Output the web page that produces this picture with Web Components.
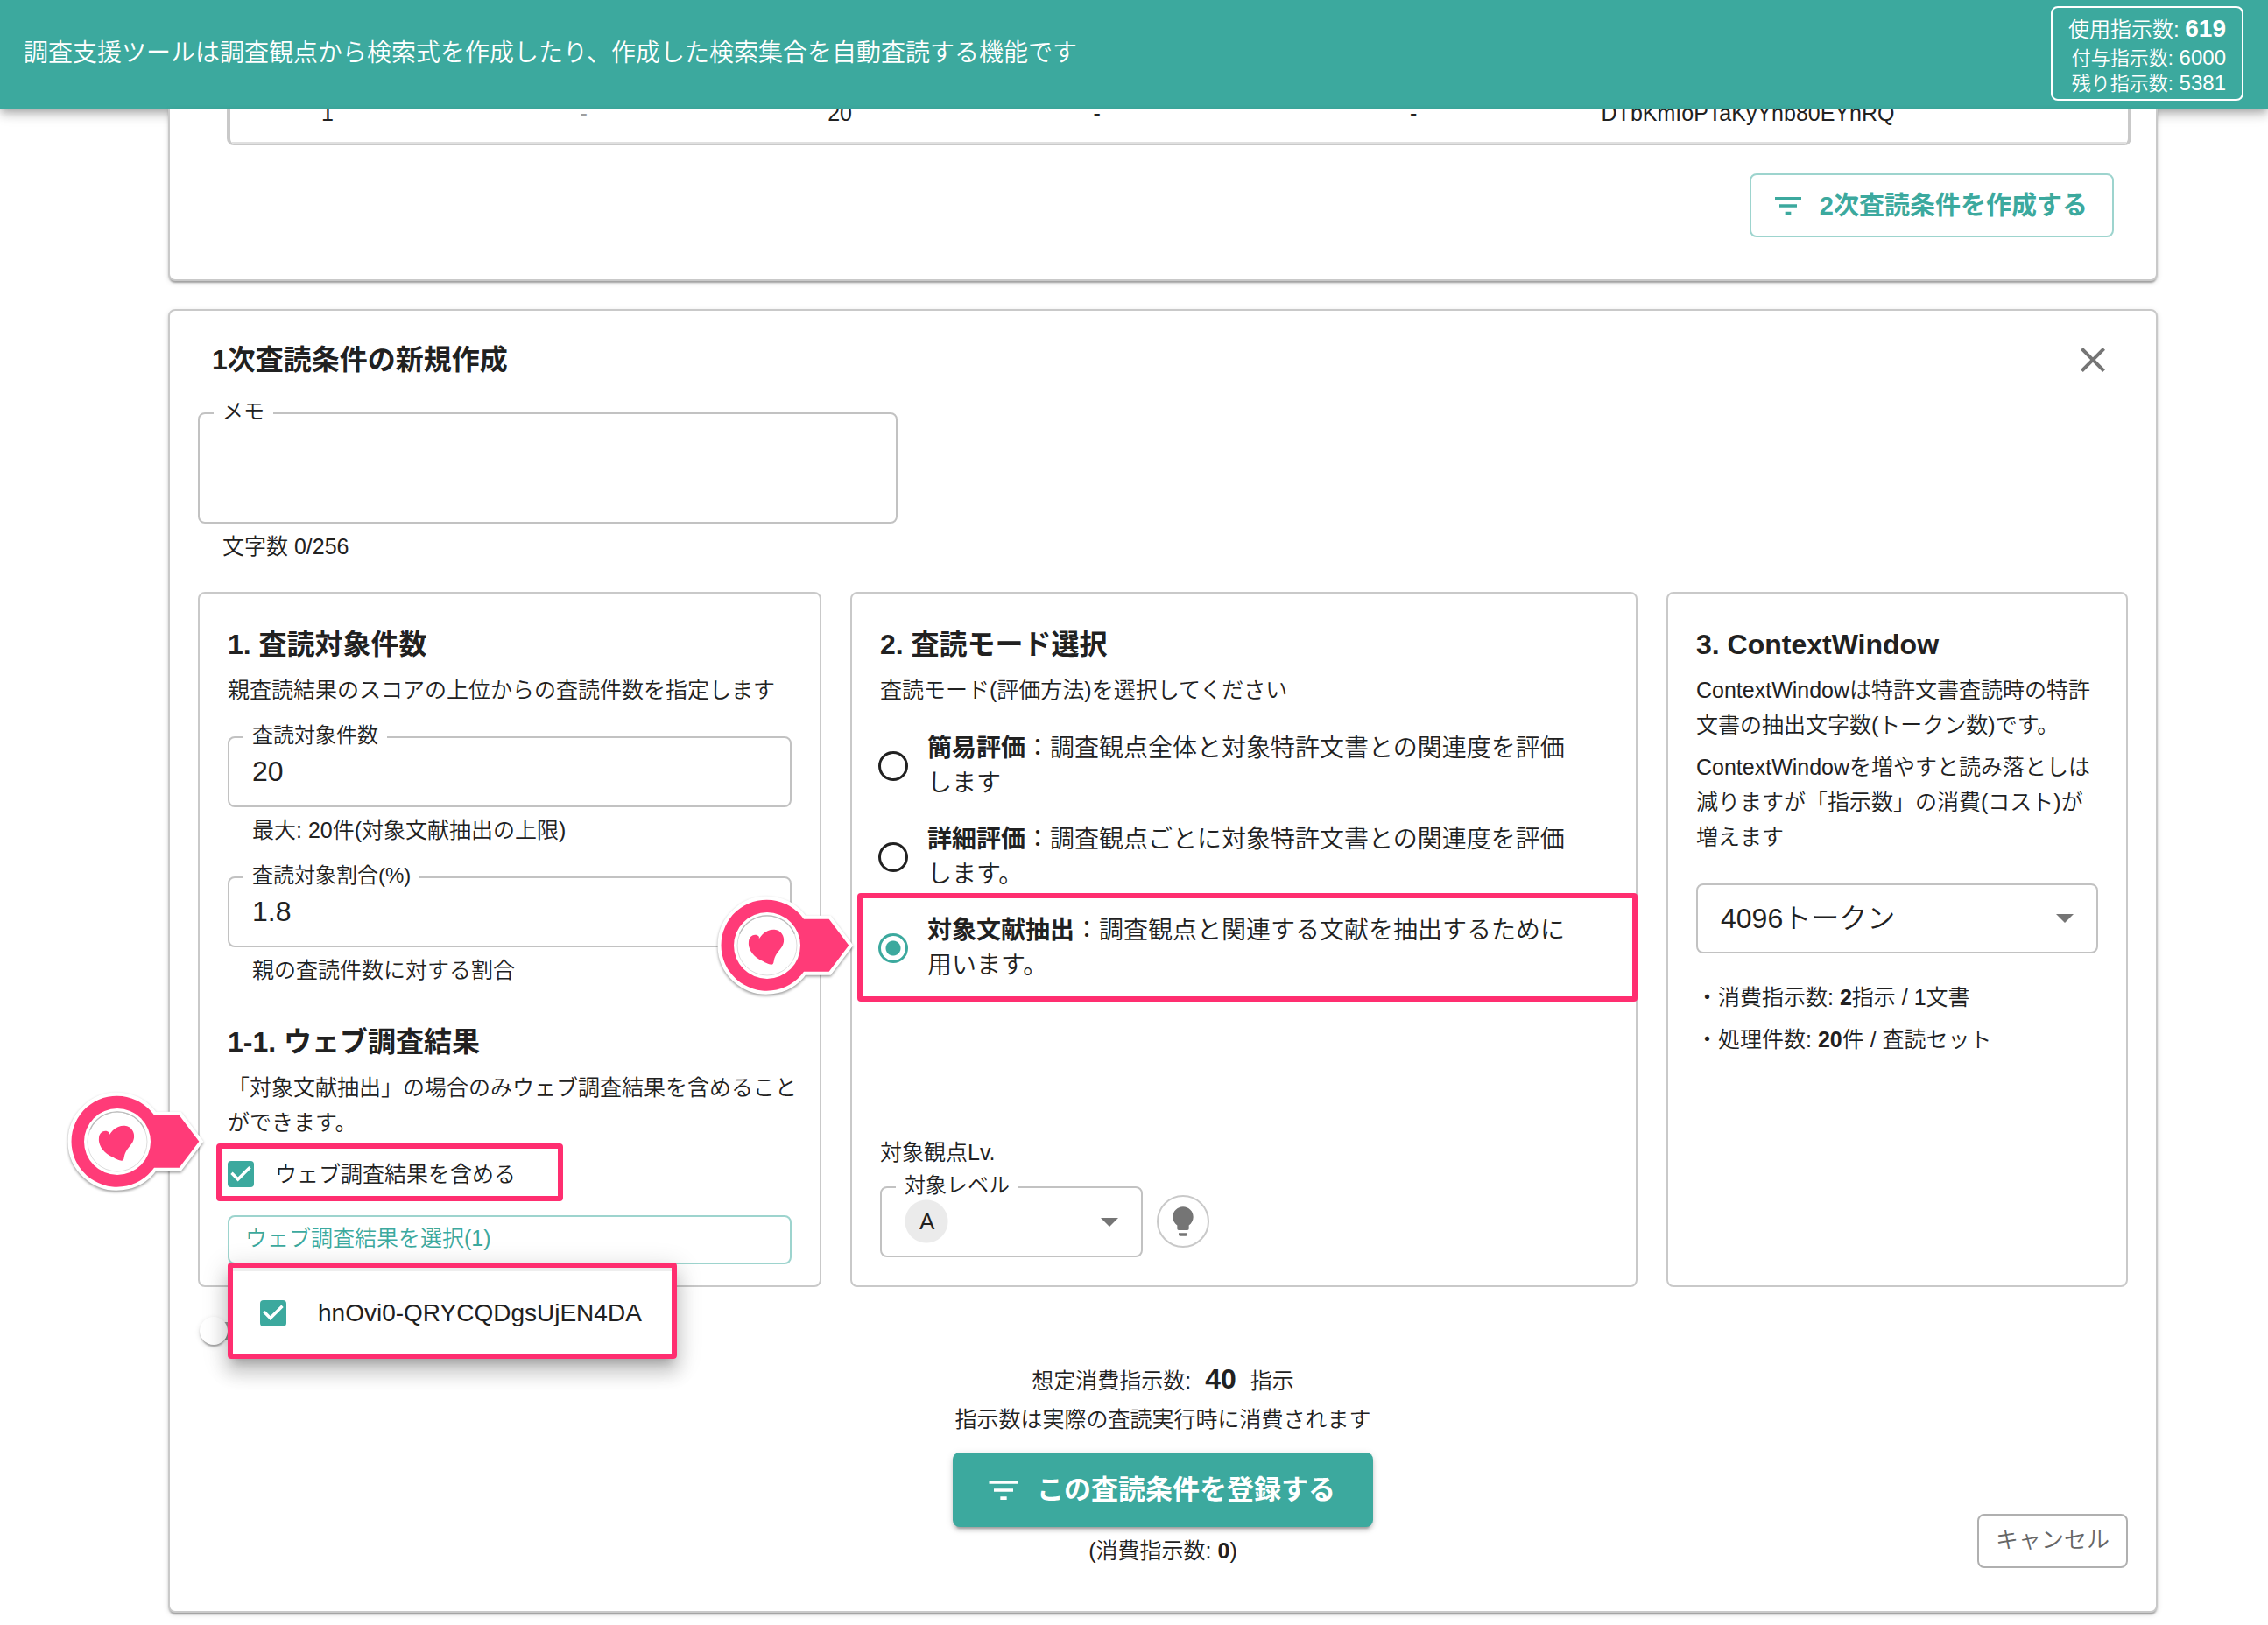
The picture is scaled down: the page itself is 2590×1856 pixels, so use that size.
<!DOCTYPE html>
<html lang="ja">
<head>
<meta charset="utf-8">
<meta name="viewport" content="width=device-width, initial-scale=1">
<title>調査支援ツール</title>
<style>
  :root {
    --teal: #3ca99e;
    --teal-line: #9dd4ce;
    --pink: #ff2e70;
    --pin: #ff3b78;
    --ink: #212121;
    --icon: #757575;
    --line: #c9c9c9;
    --field-line: #c2c2c2;
  }
  body {
    margin: 0;
    background: #fff;
    color: var(--ink);
    font: 350 25px/40px "Liberation Sans", "Noto Sans CJK JP", sans-serif;
  }
  main {
    display: flex;
    flex-direction: column;
    gap: 32px;
    padding: 0 126px 12px 192px;
  }
</style>
</head>
<body>
<app-header>調査支援ツールは調査観点から検索式を作成したり、作成した検索集合を自動査読する機能です</app-header>
<main>
  <review-list-panel></review-list-panel>
  <condition-panel></condition-panel>
</main>

<script>
const define = (name, html, setup) => {
  const template = document.createElement('template');
  template.innerHTML = '<style>*{box-sizing:border-box}h2,h3,p,ul{margin:0;padding:0}b{font-weight:700}button,input,select,textarea{font:inherit;color:inherit}</style>' + html;
  customElements.define(name, class extends HTMLElement {
    constructor() {
      super();
      this.attachShadow({ mode: 'open' }).append(template.content.cloneNode(true));
    }
    connectedCallback() {
      if (setup) setup(this.shadowRoot, this);
    }
  });
};

/* Filter lines icon used by both action buttons */
define('filter-icon', `
<style>
  :host { display: block; width: 40px; height: 40px; }
  svg { display: block; width: 100%; height: 100%; fill: currentColor; }
</style>
<svg viewBox="0 0 24 24" aria-hidden="true"><path d="M10 18h4v-2h-4v2zM3 6v2h18V6H3zm3 7h12v-2H6v2z"/></svg>`);

/* Top bar */
define('app-header', `
<style>
  :host { display: block; }
  header {
    display: flex; align-items: center; justify-content: space-between;
    box-sizing: border-box; height: 124px; padding: 0 28px 2px 27px;
    background: var(--teal); color: #fff; font-size: 28px;
    box-shadow: 0 4px 8px -2px rgba(0,0,0,.2), 0 8px 10px rgba(0,0,0,.14), 0 2px 20px rgba(0,0,0,.12);
  }
</style>
<header><p><slot></slot></p><usage-box></usage-box></header>`);

define('usage-box', `
<style>
  :host { display: block; border: 2px solid #fff; border-radius: 8px; padding: 7px 18px 3px; text-align: right; }
  p { font-size: 24px; line-height: 28px; }
  p span { font-size: 22px; }
  .used { line-height: 36px; }
  .used b { font-size: 28px; line-height: 28px; }
</style>
<p class="used">使用指示数: <b>619</b></p>
<p><span>付与指示数:</span> 6000</p>
<p><span>残り指示数:</span> 5381</p>`);

/* Raised card */
define('panel-card', `
<style>
  :host {
    display: block; position: relative; box-sizing: border-box;
    border: 2px solid var(--line); border-radius: 8px; background: #fff;
    box-shadow: 0 4px 2px -2px rgba(0,0,0,.2), 0 2px 2px rgba(0,0,0,.14), 0 2px 6px rgba(0,0,0,.12);
  }
  :host([continued]) { border-top: 0; border-radius: 0 0 8px 8px; }
</style>
<slot></slot>`);

/* Tail of the review list, scrolled under the top bar */
define('review-list-panel', `
<style>
  :host { display: block; }
  .body { display: flex; flex-direction: column; align-items: flex-end; gap: 32px; padding: 0 48px 48px 65px; }
  .list {
    display: flex; align-items: flex-end; align-self: stretch; height: 42px; margin-right: -20px; overflow: hidden;
    border: solid var(--line); border-width: 0 4px 2px 4px; border-radius: 0 0 8px 8px;
  }
  table { width: 100%; table-layout: fixed; border-collapse: separate; border-spacing: 0; }
  td { padding: 0 0 13px; text-align: center; border-bottom: 2px solid #e0e0e0; }
  td.muted { color: #9e9e9e; }
  button {
    display: flex; align-items: center; gap: 16px; height: 73px; padding: 0 28px 0 22px;
    border: 2px solid var(--teal-line); border-radius: 8px; background: #fff;
    color: var(--teal); font-size: 29px; font-weight: 700;
  }
</style>
<panel-card continued>
  <div class="body">
    <div class="list">
      <table>
        <colgroup><col style="width:10.25%"><col style="width:16.75%"><col style="width:10.25%"><col style="width:16.85%"><col style="width:16.5%"><col style="width:18.75%"><col></colgroup>
        <tbody><tr><td>1</td><td class="muted">-</td><td>20</td><td>-</td><td>-</td><td>DTbKmIoPTaKyYnb80EYhRQ</td><td></td></tr></tbody>
      </table>
    </div>
    <button type="button"><filter-icon></filter-icon>2次査読条件を作成する</button>
  </div>
</panel-card>`);

/* Outlined control with its label set into the border */
const fieldStyle = `
  fieldset {
    margin: 0; padding: 0; min-width: 0;
    border: 2px solid var(--field-line); border-radius: 8px;
  }
  legend { margin-left: 16px; padding: 0 10px 4px; font-size: 24px; line-height: 24px; }
  input, textarea, select {
    display: block; width: 100%; border: 0; outline: 0; background: transparent;
    margin: 0; padding: 0 26px; resize: none; font-size: 32px;
  }`;

define('outlined-field', `
<style>
  :host { display: block; }
  ${fieldStyle}
  input { height: 50px; margin-bottom: 14px; }
  textarea { height: 110px; }
  p { margin-top: 6px; padding-left: 28px; }
</style>
<fieldset><legend><label for="control"></label></legend></fieldset>
<p><slot></slot></p>`, (root, host) => {
  if (root.getElementById('control')) return;
  const control = document.createElement(host.hasAttribute('multiline') ? 'textarea' : 'input');
  control.id = 'control';
  control.value = host.getAttribute('value') || '';
  root.querySelector('label').textContent = host.getAttribute('label');
  root.querySelector('fieldset').append(control);
});

/* Square tick box with a label */
define('check-option', `
<style>
  :host { display: block; }
  label { display: flex; align-items: center; gap: var(--check-gap, 24px); min-height: 40px; }
  input { appearance: none; flex: none; width: 30px; height: 30px; margin: 0; border-radius: 4px; border: 3px solid var(--icon); }
  input:checked { border: 0; background: var(--teal); }
  input:checked::before {
    content: ""; display: block; width: 30px; height: 30px; background: #fff;
    clip-path: polygon(39% 78%, 11% 50%, 19% 42%, 39% 62%, 81% 20%, 89% 28%);
  }
</style>
<label><input type="checkbox" checked><slot></slot></label>`);

/* Pink highlight frame around its content */
define('mark-frame', `
<style>
  :host { display: block; position: relative; }
  .frame {
    position: absolute; inset: var(--frame-inset, 0); width: var(--frame-width, auto);
    border: 6px solid var(--pink); border-radius: 4px; pointer-events: none;
  }
</style>
<slot></slot><div class="frame"></div><slot name="pin"></slot>`);

/* Heart pin pointing to the right */
define('heart-pin', `
<style>
  :host { display: block; position: absolute; width: 158px; height: 117px; z-index: 3; pointer-events: none; }
  svg { display: block; width: 100%; height: 100%; overflow: visible; }
  .body { filter: drop-shadow(0 5px 4px rgba(0,0,0,.4)); }
</style>
<svg viewBox="15 50 474 351" aria-hidden="true">
  <g class="body">
    <path fill="#fff" stroke="#fff" stroke-width="24" d="M318 130H404L472 220L404 310H318A156 156 0 1 1 318 130Z"/>
  </g>
  <path fill="var(--pin)" d="M318 130H404L472 220L404 310H318A156 156 0 1 1 318 130Z"/>
  <circle cx="192" cy="221" r="114" fill="#fff"/>
  <circle cx="192" cy="221" r="102" fill="none" stroke="#ddd" stroke-width="3"/>
  <path d="M98 181A102 102 0 0 1 286 181" fill="none" stroke="#bbb" stroke-width="4"/>
  <path fill="var(--pin)" d="M212 284C206 290 190 281 165 268C140 254 126 230 129 207C131 190 145 181 158 186C165 188 167 193 163 200C172 186 186 165 217 166C241 168 252 189 249 208C246 228 231 237 222 254C214 268 216 279 212 284Z"/>
</svg>`);

/* Bordered column of the form */
define('step-card', `
<style>
  :host {
    display: flex; flex-direction: column; box-sizing: border-box; min-width: 0;
    border: 2px solid var(--line); border-radius: 8px; padding: 34px 32px 24px;
  }
</style>
<slot></slot>`);

const headingStyle = `
  h2, h3 { font-size: 32px; line-height: 48px; font-weight: 700; }
  h3 { margin-bottom: 8px; }`;

/* Step 1 */
define('target-count-step', `
<style>
  :host { display: grid; min-width: 0; }
  ${headingStyle}
  outlined-field { margin-top: 20px; }
  .web { margin-top: 38px; }
  .note { white-space: nowrap; }
  mark-frame { margin-top: 19px; --frame-inset: -15px auto -11px -13px; --frame-width: 396px; }
  heart-pin { left: -185px; top: -74px; }
  .picker { position: relative; margin-top: 27px; }
  .picker > button {
    display: block; width: 100%; height: 56px; padding: 0 18px 4px; text-align: left;
    border: 2px solid var(--teal-line); border-radius: 8px; background: #fff; color: var(--teal);
  }
  .menu {
    position: absolute; z-index: 5; top: calc(100% - 2px); left: 0; display: flex; align-items: center;
    height: 110px; padding: 5px 34px 0 31px; border: 6px solid var(--pink); border-radius: 4px;
    background: linear-gradient(#eee 4px, #fff 4px); font-size: 28px; --check-gap: 36px;
    box-shadow: 0 10px 10px -6px rgba(0,0,0,.2), 0 16px 20px 2px rgba(0,0,0,.14), 0 6px 28px 4px rgba(0,0,0,.12);
  }
</style>
<step-card>
  <h3>1. 査読対象件数</h3>
  <p>親査読結果のスコアの上位からの査読件数を指定します</p>
  <outlined-field label="査読対象件数" value="20">最大: 20件(対象文献抽出の上限)</outlined-field>
  <outlined-field label="査読対象割合(%)" value="1.8">親の査読件数に対する割合</outlined-field>
  <h3 class="web">1-1. ウェブ調査結果</h3>
  <p class="note">「対象文献抽出」の場合のみウェブ調査結果を含めること<br>ができます。</p>
  <mark-frame>
    <check-option>ウェブ調査結果を含める</check-option>
    <heart-pin slot="pin"></heart-pin>
  </mark-frame>
  <div class="picker">
    <button type="button" aria-expanded="true">ウェブ調査結果を選択(1)</button>
    <div class="menu"><check-option>hnOvi0-QRYCQDgsUjEN4DA</check-option></div>
  </div>
</step-card>`);

/* Step 2 */
define('mode-step', `
<style>
  :host { display: grid; min-width: 0; }
  ${headingStyle}
  ${fieldStyle}
  .modes { display: flex; flex-direction: column; gap: 24px; margin: 27px 0 0 -2px; font-size: 28px; }
  .modes label { display: flex; align-items: center; gap: 22px; padding-right: 32px; }
  .modes input {
    appearance: none; flex: none; width: 34px; height: 34px; padding: 0;
    border: 3px solid var(--ink); border-radius: 50%;
  }
  .modes input:checked { border-color: var(--teal); background: radial-gradient(circle, var(--teal) 8px, transparent 9px); }
  mark-frame { --frame-inset: -23px -34px -21px -24px; }
  heart-pin { left: -186px; top: -20px; }
  .level { margin-top: auto; margin-bottom: 8px; }
  .level-row { display: flex; align-items: flex-end; gap: 16px; margin-top: 6px; }
  fieldset { width: 300px; position: relative; }
  select {
    appearance: none; height: 50px; margin-bottom: 14px; padding: 0 43px; font-size: 26px;
    background: radial-gradient(circle at 51px 25px, #ebebeb 24px, transparent 25px);
  }
  .arrow { position: absolute; right: 26px; top: 21px; width: 20px; height: 10px; background: var(--icon); clip-path: polygon(0 0, 100% 0, 50% 100%); pointer-events: none; }
  button { display: grid; place-items: center; width: 60px; height: 60px; margin-bottom: 11px; padding: 0; border: 2px solid var(--line); border-radius: 50%; background: #fff; }
  svg { width: 40px; height: 40px; fill: var(--icon); }
</style>
<step-card>
  <h3>2. 査読モード選択</h3>
  <p>査読モード(評価方法)を選択してください</p>
  <div class="modes">
    <label><input type="radio" name="mode"><span><b>簡易評価</b>：調査観点全体と対象特許文書との関連度を評価します</span></label>
    <label><input type="radio" name="mode"><span><b>詳細評価</b>：調査観点ごとに対象特許文書との関連度を評価します。</span></label>
    <mark-frame>
      <label><input type="radio" name="mode" checked><span><b>対象文献抽出</b>：調査観点と関連する文献を抽出するために用います。</span></label>
      <heart-pin slot="pin"></heart-pin>
    </mark-frame>
  </div>
  <div class="level">
    <p>対象観点Lv.</p>
    <div class="level-row">
      <fieldset>
        <legend><label for="level">対象レベル</label></legend>
        <select id="level"><option>A</option></select>
        <span class="arrow"></span>
      </fieldset>
      <button type="button" aria-label="ヒント"><svg viewBox="0 0 24 24"><path d="M9 21c0 .5.4 1 1 1h4c.6 0 1-.5 1-1v-1H9v1zm3-19C8.1 2 5 5.1 5 9c0 2.400 1.200 4.500 3 5.700V17c0 .5.4 1 1 1h6c.6 0 1-.5 1-1v-2.300c1.800-1.300 3-3.400 3-5.700 0-3.900-3.100-7-7-7z"/></svg></button>
    </div>
  </div>
</step-card>`);

/* Step 3 */
define('context-step', `
<style>
  :host { display: grid; min-width: 0; }
  ${headingStyle}
  p + p { margin-top: 8px; }
  .select { position: relative; margin-top: 33px; }
  select {
    appearance: none; display: block; width: 100%; height: 80px; padding: 0 26px; font-size: 32px;
    border: 2px solid var(--field-line); border-radius: 8px; background: #fff;
  }
  .arrow { position: absolute; right: 28px; top: 35px; width: 20px; height: 10px; background: var(--icon); clip-path: polygon(0 0, 100% 0, 50% 100%); pointer-events: none; }
  ul { list-style: none; display: flex; flex-direction: column; gap: 8px; margin-top: 30px; }
</style>
<step-card>
  <h3>3. ContextWindow</h3>
  <p>ContextWindowは特許文書査読時の特許文書の抽出文字数(トークン数)です。</p>
  <p>ContextWindowを増やすと読み落としは減りますが「指示数」の消費(コスト)が増えます</p>
  <div class="select"><select aria-label="ContextWindow"><option>4096トークン</option></select><span class="arrow"></span></div>
  <ul>
    <li>・消費指示数: <b>2</b>指示 / 1文書</li>
    <li>・処理件数: <b>20</b>件 / 査読セット</li>
  </ul>
</step-card>`);

/* Small switch */
define('small-switch', `
<style>
  :host { display: block; height: 32px; }
  input { appearance: none; display: flex; align-items: center; width: 52px; height: 20px; margin: 6px 0 0 8px; border-radius: 10px; background: #9e9e9e; }
  input::before {
    content: ""; flex: none; width: 32px; height: 32px; margin-left: -6px; border-radius: 50%; background: #fff;
    box-shadow: 0 4px 2px -2px rgba(0,0,0,.2), 0 2px 2px rgba(0,0,0,.14), 0 2px 6px rgba(0,0,0,.12);
  }
</style>
<input type="checkbox" role="switch" aria-label="表示切替">`);

/* Totals and final actions */
define('form-actions', `
<style>
  :host { display: grid; grid-template-columns: 1fr auto 1fr; align-items: end; }
  .center { grid-column: 2; display: flex; flex-direction: column; align-items: center; }
  .total b { margin: 0 16px; font-size: 32px; line-height: 32px; }
  .total + p { margin-top: 4px; }
  .submit {
    display: flex; align-items: center; gap: 16px; height: 85px; margin: 18px 0 7px; padding: 0 43px 0 36px;
    border: 0; border-radius: 8px; background: var(--teal); color: #fff; font-size: 31px; font-weight: 700;
    box-shadow: 0 6px 2px -4px rgba(0,0,0,.2), 0 4px 4px rgba(0,0,0,.14), 0 2px 10px rgba(0,0,0,.12);
  }
  .submit filter-icon { width: 44px; height: 44px; }
  .cancel {
    justify-self: end; height: 62px; padding: 0 19px 2px; border: 2px solid #b0b0b0; border-radius: 8px;
    background: #fff; color: #666; font-size: 26px;
  }
</style>
<div class="center">
  <p class="total">想定消費指示数:<b>40</b>指示</p>
  <p>指示数は実際の査読実行時に消費されます</p>
  <button class="submit" type="button"><filter-icon></filter-icon>この査読条件を登録する</button>
  <p>(消費指示数: <b>0</b>)</p>
</div>
<button class="cancel" type="button">キャンセル</button>`);

/* New condition form */
define('condition-panel', `
<style>
  :host { display: block; }
  ${headingStyle}
  panel-card { padding: 32px 32px 49px; }
  .head { display: flex; align-items: center; justify-content: space-between; padding: 0 16px; margin-bottom: 23px; }
  .head button { width: 48px; height: 48px; padding: 0; border: 0; background: none; }
  .head svg { display: block; width: 48px; height: 48px; fill: var(--icon); }
  .memo { width: 36.25%; }
  .steps { display: grid; grid-template-columns: 712fr 899fr 527fr; gap: 33px; margin-top: 32px; }
  small-switch { margin-top: 40px; }
  form-actions { margin-top: 15px; }
</style>
<panel-card>
  <div class="head">
    <h2>1次査読条件の新規作成</h2>
    <button type="button" aria-label="閉じる"><svg viewBox="0 0 24 24"><path d="M19 6.410L17.590 5 12 10.590 6.410 5 5 6.410 10.590 12 5 17.590 6.410 19 12 13.410 17.590 19 19 17.590 13.410 12z"/></svg></button>
  </div>
  <outlined-field class="memo" label="メモ" multiline>文字数 0/256</outlined-field>
  <div class="steps">
    <target-count-step></target-count-step>
    <mode-step></mode-step>
    <context-step></context-step>
  </div>
  <small-switch></small-switch>
  <form-actions></form-actions>
</panel-card>`);
</script>
</body>
</html>
